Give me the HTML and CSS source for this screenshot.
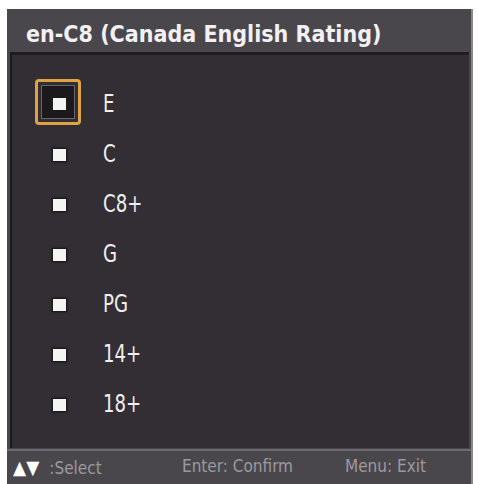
FILE: index.html
```html
<!DOCTYPE html>
<html>
<head>
<meta charset="utf-8">
<link rel="stylesheet" href="styles.css">
</head>
<body>
<div class="panel">
  <div class="title">en-C8 (Canada English Rating)</div>
  <div class="content">
    <ul class="list">
      <li class="row selected"><span class="cell"><span class="focus"><span class="inner"><span class="sq"></span></span></span></span><span class="label">E</span></li>
      <li class="row"><span class="cell"><span class="sq"></span></span><span class="label">C</span></li>
      <li class="row"><span class="cell"><span class="sq"></span></span><span class="label">C8+</span></li>
      <li class="row"><span class="cell"><span class="sq"></span></span><span class="label">G</span></li>
      <li class="row"><span class="cell"><span class="sq"></span></span><span class="label">PG</span></li>
      <li class="row"><span class="cell"><span class="sq"></span></span><span class="label">14+</span></li>
      <li class="row"><span class="cell"><span class="sq"></span></span><span class="label">18+</span></li>
    </ul>
  </div>
  <div class="footer">
    <span class="hint hint-select"><span class="arrows">▲▼</span>:Select</span>
    <span class="hint hint-enter">Enter: Confirm</span>
    <span class="hint hint-menu">Menu: Exit</span>
  </div>
</div>
</body>
</html>
```
FILE: styles.css
```css
html, body {
  margin: 0;
  padding: 0;
  background: #ffffff;
}
body {
  width: 478px;
  height: 484px;
  overflow: hidden;
  font-family: "DejaVu Sans Condensed", "DejaVu Sans", sans-serif;
}
.panel {
  margin: 9px 0 0 7px;
  width: 466px;
  height: 475px;
  background: #4a474c;
  border-right: 2px solid #8a888c;
  display: flex;
  flex-direction: column;
  box-sizing: border-box;
}
.title {
  height: 43px;
  box-sizing: border-box;
  padding: 12px 0 0 19px;
  color: #f2f0f2;
  font-size: 23px;
  font-weight: bold;
  line-height: 26px;
  white-space: nowrap;
}
.content {
  margin: 0 2px 0 3px;
  height: 396px;
  background: #322e33;
  border-top: 3px solid #201d21;
  border-left: 2px solid #1c1a1d;
  box-sizing: border-box;
}
.list {
  list-style: none;
  margin: 0;
  padding: 24px 0 0 0;
}
.row {
  height: 50px;
  display: flex;
  align-items: center;
}
.cell {
  width: 46px;
  height: 46px;
  margin-left: 23px;
  display: flex;
  align-items: center;
  justify-content: center;
}
.sq {
  width: 13px;
  height: 12px;
  background: #f4f4f2;
  box-shadow: 0 0 2px 1px #111;
  margin: 1px 0 0 3px;
}
.focus {
  width: 46px;
  height: 46px;
  box-sizing: border-box;
  border: 3px solid #dca444;
  border-radius: 4px;
  padding: 3px;
  display: flex;
  margin-top: -4px;
}
.inner {
  flex: 1;
  border: 1px solid #67656a;
  background: #1b191c;
  display: flex;
  align-items: center;
  justify-content: center;
}
.inner .sq {
  margin: 4px 0 0 2px;
  box-shadow: none;
}
.label {
  margin-left: 22px;
  color: #f0eef0;
  font-size: 24px;
  line-height: 26px;
  transform: scaleX(0.84);
  transform-origin: left center;
}
.footer {
  flex: 1;
  border-top: 2px solid #6d6a6f;
  margin-top: 1px;
  position: relative;
  color: #9c999e;
  font-size: 17px;
}
.hint {
  position: absolute;
  top: 5px;
  white-space: nowrap;
}
.hint-select { left: 6px; }
.hint-enter { left: 175px; }
.hint-menu { left: 338px; }
.arrows {
  color: #ffffff;
  font-size: 19px;
  margin-right: 10px;
}
```
